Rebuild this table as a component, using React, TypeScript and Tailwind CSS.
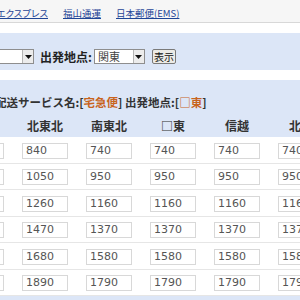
import React from "react";

const regions = ["北海道", "北東北", "南東北", "□東", "信越", "北陸"];

const prices: number[][] = [
  [1160, 840, 740, 740, 740, 740],
  [1370, 1050, 950, 950, 950, 950],
  [1580, 1260, 1160, 1160, 1160, 1160],
  [1790, 1470, 1370, 1370, 1370, 1370],
  [2000, 1680, 1580, 1580, 1580, 1580],
  [2210, 1890, 1790, 1790, 1790, 1790],
];

const jp = { fontFamily: '"Noto Sans CJK JP", "DejaVu Sans", sans-serif' };
const num = { fontFamily: '"DejaVu Sans", Verdana, sans-serif' };

const ArrowButton: React.FC = () => (
  <div className="w-[11px] h-full border-l border-[#b5b5b5] bg-[#ececec] flex items-center justify-center">
    <svg width="7" height="4" viewBox="0 0 7 4">
      <path d="M0 0h7L3.5 4z" fill="#111" />
    </svg>
  </div>
);

const Select: React.FC<{ className?: string; label?: string }> = ({
  className,
  label,
}) => (
  <div
    className={
      "h-[15px] border border-[#8e8e8e] bg-white flex items-stretch " +
      (className || "")
    }
  >
    <div className="flex-1 pl-[3px] text-[11px] leading-[13px] text-[#444]">
      {label}
    </div>
    <ArrowButton />
  </div>
);

const App: React.FC = () => {
  return (
    <div
      className="w-[300px] h-[300px] overflow-hidden bg-white text-[#333]"
      style={jp}
    >
      {/* carrier links */}
      <div className="h-[23px] bg-[#f6f6f6] border-b border-[#d8d8d8] flex items-center gap-[15px] pt-[5px] text-[9.5px] whitespace-nowrap [font-feature-settings:'palt']">
        <div className="w-[48px] shrink-0 flex justify-end overflow-hidden">
          <a className="text-[#1f4596] underline">ゆうPエクスプレス</a>
        </div>
        <a className="text-[#1f4596] underline">福山通運</a>
        <a className="text-[#1f4596] underline">日本郵便(EMS)</a>
      </div>

      <div className="h-[10px]" />

      {/* search form */}
      <div className="h-[37px] bg-[#dce6f7] flex items-start pt-[16px] whitespace-nowrap">
        <Select className="ml-[-40px] w-[74px]" />
        <span className="ml-[6px] text-[12px] leading-[15px] font-bold text-[#222]">
          出発地点:
        </span>
        <Select className="ml-[2px] w-[51px]" label="関東" />
        <button className="ml-[7px] h-[15px] w-[24px] border border-[#7a7a7a] rounded-[2px] bg-[#ecebe6] text-[10px] leading-[12px] text-[#111]">
          表示
        </button>
      </div>

      <div className="h-[10px]" />

      {/* price table */}
      <div className="bg-[#dce6f7]">
        <div className="h-[35px] pt-[14px] text-[11.5px] leading-[16px] font-bold whitespace-nowrap ml-[-5px]">
          配送サービス名:[<span className="text-[#c8641e]">宅急便</span>] 出発地点:[
          <span className="text-[#c8641e]">□東</span>]
        </div>

        <div className="h-[22px] flex items-center ml-[-51px]">
          {regions.map((r) => (
            <div
              key={r}
              className="w-[64px] shrink-0 text-center text-[12px] font-bold"
            >
              {r}
            </div>
          ))}
        </div>

        <div className="bg-white">
          {prices.map((row, i) => (
            <div
              key={i}
              className="h-[26.5px] flex items-center pt-[2px] border-b border-[#e6e6e6] ml-[-51px]"
            >
              {row.map((p, j) => (
                <div key={j} className="w-[64px] shrink-0 flex justify-center">
                  <div
                    className="w-[46px] h-[16px] border border-[#d8d8d8] bg-white pl-[3px] text-[11px] leading-[14px] text-[#555]"
                    style={num}
                  >
                    {p}
                  </div>
                </div>
              ))}
            </div>
          ))}
        </div>
        <div className="h-[12px]" />
      </div>
    </div>
  );
};

export default App;
